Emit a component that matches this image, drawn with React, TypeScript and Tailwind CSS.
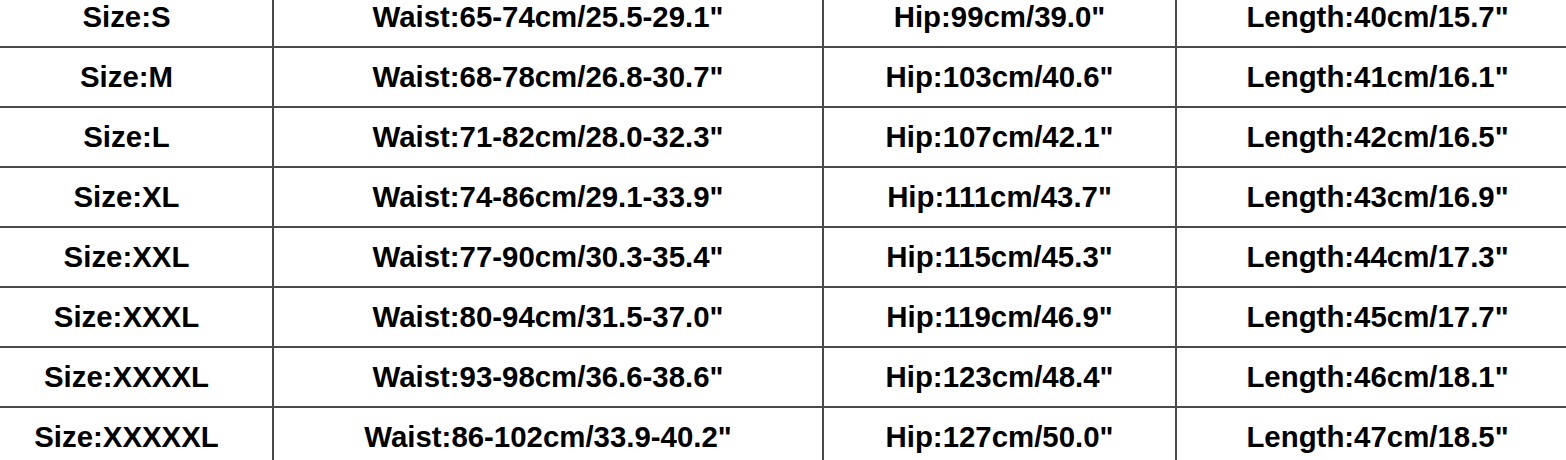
const rows = [
  ["Size:S", 'Waist:65-74cm/25.5-29.1"', 'Hip:99cm/39.0"', 'Length:40cm/15.7"'],
  ["Size:M", 'Waist:68-78cm/26.8-30.7"', 'Hip:103cm/40.6"', 'Length:41cm/16.1"'],
  ["Size:L", 'Waist:71-82cm/28.0-32.3"', 'Hip:107cm/42.1"', 'Length:42cm/16.5"'],
  ["Size:XL", 'Waist:74-86cm/29.1-33.9"', 'Hip:111cm/43.7"', 'Length:43cm/16.9"'],
  ["Size:XXL", 'Waist:77-90cm/30.3-35.4"', 'Hip:115cm/45.3"', 'Length:44cm/17.3"'],
  ["Size:XXXL", 'Waist:80-94cm/31.5-37.0"', 'Hip:119cm/46.9"', 'Length:45cm/17.7"'],
  ["Size:XXXXL", 'Waist:93-98cm/36.6-38.6"', 'Hip:123cm/48.4"', 'Length:46cm/18.1"'],
  ["Size:XXXXXL", 'Waist:86-102cm/33.9-40.2"', 'Hip:127cm/50.0"', 'Length:47cm/18.5"'],
];

export default function App() {
  return (
    <div className="h-[460px] w-[1566px] overflow-hidden bg-white">
      <div className="-ml-[19px] -mt-[12px] grid w-[1599px] grid-cols-[293px_550px_353px_403px] font-['Liberation_Sans',Arial,sans-serif] text-[29.4px] font-bold text-black">
        {rows.map((row, i) =>
          row.map((cell, j) => (
            <div
              key={`${i}-${j}`}
              className="flex h-[60px] items-center justify-center border-r-2 border-b-2 border-[#4a4a4a] whitespace-nowrap"
            >
              {cell}
            </div>
          )),
        )}
      </div>
    </div>
  );
}
